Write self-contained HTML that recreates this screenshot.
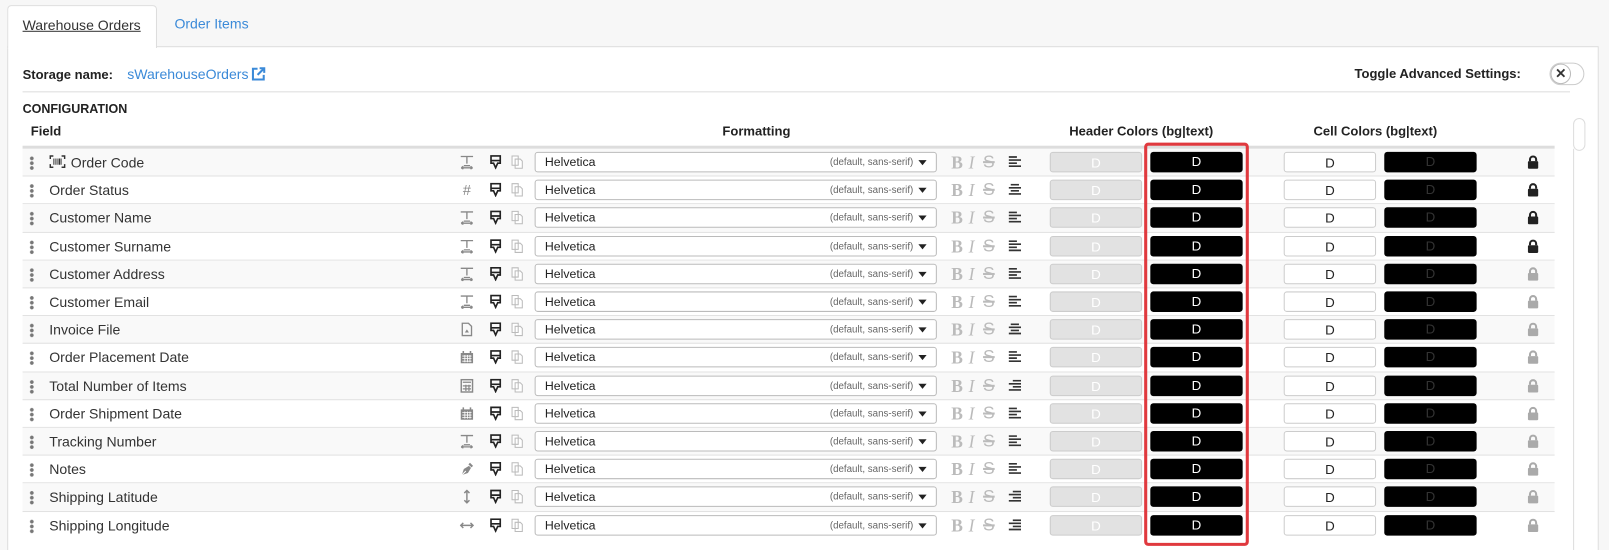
<!DOCTYPE html>
<html style="overflow:hidden;height:550px"><head><meta charset="utf-8"><style>
*{box-sizing:border-box;margin:0;padding:0}
body{width:1609px;height:550px;background:#f7f7f7;font-family:"Liberation Sans",sans-serif;position:relative;overflow:hidden;color:#333}
#w{position:absolute;left:0;top:0;width:1568px;height:536px;overflow:hidden;transform:scale(1.02615);transform-origin:0 0}
.tab{position:absolute;left:7px;top:5px;width:146px;height:42px;background:#fff;border:1px solid #ddd;border-bottom:none;border-radius:4px 4px 0 0;z-index:2}
.tab span{position:absolute;left:14px;top:11px;font-size:13.7px;color:#333;text-decoration:underline}
.tab2{position:absolute;left:170px;top:16px;font-size:13.7px;color:#3b8ad8}
.panel{position:absolute;left:7px;top:45px;width:1551px;height:500px;background:#fff;border:1px solid #ddd}
.abs{position:absolute}
.r{position:absolute;left:22px;width:1493px;height:27.2px;border-bottom:1px solid #e2e2e2}
.r.g{background:#f9f9f9}
.r>*{position:absolute}
.dots{left:7px;top:7px;width:4px;height:14px;background:radial-gradient(circle,#777 1.6px,transparent 2px) 0 0/4px 4.7px repeat-y}
.n{left:26px;top:6px;font-size:13.7px;color:#333}
.t{left:426px;top:6px;width:14px;height:14px;color:#888;font-size:14px;line-height:14px;text-align:center}
.pin{left:455px;top:6px}
.cp{left:476px;top:6px}
.sel{left:499px;top:3px;width:392px;height:20px;border:1px solid #bbb;border-radius:3px;background:#fff;font-size:12px;line-height:18px;padding-left:9px;color:#222}
.sel em{position:absolute;right:22px;top:1px;font-style:normal;font-size:9.5px;color:#666}
.sel b{position:absolute;right:9px;top:7px;border-left:4px solid transparent;border-right:4px solid transparent;border-top:5px solid #222}
.bis{left:0;top:0;width:1px;height:1px;font-family:"Liberation Serif",serif;font-size:17px;color:#bbb}
.bis>*{position:absolute;top:4px}
.bis b{left:905px}
.bis i{left:922px}
.bis s{left:936px;top:3px;font-family:"Liberation Sans",sans-serif;font-size:17px;text-decoration-thickness:1.5px}
.al{left:961px;top:7px}
.in{top:3px;width:90px;height:20px;border-radius:3px;font-size:13px;line-height:19px;text-align:center}
.hb{left:1001px;background:#e2e2e2;border:1px solid #ccc;color:#fff}
.ht{left:1099px;background:#000;color:#fff}
.cb{left:1229px;background:#fff;border:1px solid #ccc;color:#222}
.ct{left:1327px;background:#000;color:#333}
.lk{left:1466px;top:6px}
</style></head><body>
<svg width="0" height="0" style="position:absolute">
<defs>
<symbol id="pin" viewBox="0 0 12 14"><path d="M1.5 1h9v7h-2.5l-2 4.5-2-4.5h-2.5z M1.5 5.5h9" fill="none" stroke="#222" stroke-width="1.6"/></symbol>
<symbol id="cp" viewBox="0 0 12 14"><path d="M1 1h6v9H1z M4 4h5l2 2v7H4z" fill="#fff" stroke="#bbb" stroke-width="1"/></symbol>
<symbol id="aL" viewBox="0 0 12 12"><path d="M0 1h8M0 4h12M0 7h8M0 10h12" stroke="#333" stroke-width="1.6"/></symbol>
<symbol id="aC" viewBox="0 0 12 12"><path d="M2 1h8M0 4h12M2 7h8M0 10h12" stroke="#333" stroke-width="1.6"/></symbol>
<symbol id="aR" viewBox="0 0 12 12"><path d="M4 1h8M0 4h12M4 7h8M0 10h12" stroke="#333" stroke-width="1.6"/></symbol>
<symbol id="lk" viewBox="0 0 12 14"><path d="M3 6V4.5a3 3 0 0 1 6 0V6" fill="none" stroke="currentColor" stroke-width="2"/><rect x="1" y="6" width="10" height="7.5" rx="1" fill="currentColor"/></symbol>
<symbol id="tx" viewBox="0 0 14 14"><path d="M1 1.5h12M7 1.5v7M4 10.5h6 M1.5 12.5h11M1.5 12.5l2-1.5M1.5 12.5l2 1.5M12.5 12.5l-2-1.5M12.5 12.5l-2 1.5" fill="none" stroke="#888" stroke-width="1.3"/></symbol>
<symbol id="cal" viewBox="0 0 14 14"><path d="M1 3h12v10H1z" fill="#888"/><path d="M3.5 1v3M10.5 1v3" stroke="#888" stroke-width="1.5"/><path d="M2.5 6h9M2.5 8.5h9M2.5 11h9M5 5v7M7.5 5v7M10 5v7" stroke="#fff" stroke-width=".8"/></symbol>
<symbol id="calc" viewBox="0 0 14 14"><rect x="1.5" y="1" width="11" height="12" fill="none" stroke="#888" stroke-width="1.4"/><path d="M3 3.5h8M3 7h8M3 10h8M6 6v6M9 6v6" stroke="#888" stroke-width="1.2"/></symbol>
<symbol id="file" viewBox="0 0 14 14"><path d="M2.5 1h6l3 3v9h-9z" fill="none" stroke="#888" stroke-width="1.3"/><path d="M5 10l2-3 2 3z" fill="#888"/></symbol>
<symbol id="pen" viewBox="0 0 14 14"><path d="M2 13l2-6 5-3 2 2-3 5z" fill="#888"/><path d="M10 1l3 3-1.5 1.5-3-3z" fill="#888"/><path d="M2 13l4-4" stroke="#fff" stroke-width="1"/></symbol>
<symbol id="ud" viewBox="0 0 14 14"><path d="M7 1v12M4.5 3.5L7 1l2.5 2.5M4.5 10.5L7 13l2.5-2.5" fill="none" stroke="#888" stroke-width="1.4"/></symbol>
<symbol id="lr" viewBox="0 0 14 14"><path d="M1 7h12M3.5 4.5L1 7l2.5 2.5M10.5 4.5L13 7l-2.5 2.5" fill="none" stroke="#888" stroke-width="1.4"/></symbol>
</defs></svg>
<div id="w">
<div class="tab"><span>Warehouse Orders</span></div>
<div class="tab2">Order Items</div>
<div class="panel"></div>

<div class="abs" style="left:22px;top:66px;font-size:12.7px;font-weight:bold;color:#222">Storage name:</div>
<div class="abs" style="left:124px;top:65px;font-size:13.7px;color:#3b8ad8">sWarehouseOrders</div>
<svg class="abs" style="left:245px;top:65px" width="14" height="14" viewBox="0 0 14 14"><path d="M6 2H1.5v10.5H12V8" fill="none" stroke="#3b8ad8" stroke-width="2"/><path d="M6 8l6-6M8 1.5h4.5V6" fill="none" stroke="#3b8ad8" stroke-width="2"/></svg>
<div class="abs" style="left:1320px;top:65px;font-size:12.7px;font-weight:bold;color:#222">Toggle Advanced Settings:</div>
<div class="abs" style="left:1510px;top:61px;width:34px;height:22px;border:1px solid #ccc;border-radius:11px;background:#fff"><div style="position:absolute;left:0;top:0;width:20px;height:20px;border-radius:50%;border:1px solid #bbb;font-size:13px;line-height:18px;text-align:center;font-weight:bold;color:#333">✕</div></div>
<div class="abs" style="left:22px;top:89px;width:1508px;height:1px;background:#ddd"></div>
<div class="abs" style="left:22px;top:99px;font-size:12.2px;font-weight:bold;color:#222">CONFIGURATION</div>
<div class="abs" style="left:30px;top:121px;font-size:12.7px;font-weight:bold;color:#222">Field</div>
<div class="abs" style="left:704px;top:121px;font-size:12.7px;font-weight:bold;color:#222">Formatting</div>
<div class="abs" style="left:1042px;top:121px;font-size:12.7px;font-weight:bold;color:#222">Header Colors (bg|text)</div>
<div class="abs" style="left:1280px;top:121px;font-size:12.7px;font-weight:bold;color:#222">Cell Colors (bg|text)</div>
<div class="abs" style="left:22px;top:142px;width:1493px;height:3px;background:#ddd"></div>
<div class="abs" style="left:1533px;top:115px;width:12px;height:32px;border:1px solid #ddd;border-radius:6px;background:#fff"></div>
<div class="abs" style="left:1533px;top:145px;width:12px;height:400px;border-left:1px solid #ddd"></div>

<div class="r g" style="top:145px"><i class="dots"></i><svg style="position:absolute;left:26px;top:6px" width="16" height="13" viewBox="0 0 16 13"><path d="M1 4V1h3M12 1h3v3M15 9v3h-3M4 12H1V9" fill="none" stroke="#333" stroke-width="1.4"/><path d="M4.5 3.5v6M6.5 3.5v6M8.5 3.5v6M10 3.5v6M11.5 3.5v6" stroke="#333" stroke-width="1"/></svg><span class="n" style="left:47px">Order Code</span><svg class="t"><use href="#tx"/></svg><svg class="pin" width="12" height="14"><use href="#pin"/></svg><svg class="cp" width="12" height="14"><use href="#cp"/></svg><div class="sel">Helvetica<em>(default, sans-serif)</em><b></b></div><span class="bis"><b>B</b><i>I</i><s>S</s></span><svg class="al" width="12" height="12"><use href="#aL"/></svg><div class="in hb">D</div><div class="in ht">D</div><div class="in cb">D</div><div class="in ct">D</div><svg class="lk" width="12" height="14" style="color:#222"><use href="#lk"/></svg></div>

<div class="r" style="top:172.2px"><i class="dots"></i><span class="n">Order Status</span><span class="t">#</span><svg class="pin" width="12" height="14"><use href="#pin"/></svg><svg class="cp" width="12" height="14"><use href="#cp"/></svg><div class="sel">Helvetica<em>(default, sans-serif)</em><b></b></div><span class="bis"><b>B</b><i>I</i><s>S</s></span><svg class="al" width="12" height="12"><use href="#aC"/></svg><div class="in hb">D</div><div class="in ht">D</div><div class="in cb">D</div><div class="in ct">D</div><svg class="lk" width="12" height="14" style="color:#222"><use href="#lk"/></svg></div>

<div class="r g" style="top:199.4px"><i class="dots"></i><span class="n">Customer Name</span><svg class="t"><use href="#tx"/></svg><svg class="pin" width="12" height="14"><use href="#pin"/></svg><svg class="cp" width="12" height="14"><use href="#cp"/></svg><div class="sel">Helvetica<em>(default, sans-serif)</em><b></b></div><span class="bis"><b>B</b><i>I</i><s>S</s></span><svg class="al" width="12" height="12"><use href="#aL"/></svg><div class="in hb">D</div><div class="in ht">D</div><div class="in cb">D</div><div class="in ct">D</div><svg class="lk" width="12" height="14" style="color:#222"><use href="#lk"/></svg></div>

<div class="r" style="top:226.6px"><i class="dots"></i><span class="n">Customer Surname</span><svg class="t"><use href="#tx"/></svg><svg class="pin" width="12" height="14"><use href="#pin"/></svg><svg class="cp" width="12" height="14"><use href="#cp"/></svg><div class="sel">Helvetica<em>(default, sans-serif)</em><b></b></div><span class="bis"><b>B</b><i>I</i><s>S</s></span><svg class="al" width="12" height="12"><use href="#aL"/></svg><div class="in hb">D</div><div class="in ht">D</div><div class="in cb">D</div><div class="in ct">D</div><svg class="lk" width="12" height="14" style="color:#222"><use href="#lk"/></svg></div>

<div class="r g" style="top:253.8px"><i class="dots"></i><span class="n">Customer Address</span><svg class="t"><use href="#tx"/></svg><svg class="pin" width="12" height="14"><use href="#pin"/></svg><svg class="cp" width="12" height="14"><use href="#cp"/></svg><div class="sel">Helvetica<em>(default, sans-serif)</em><b></b></div><span class="bis"><b>B</b><i>I</i><s>S</s></span><svg class="al" width="12" height="12"><use href="#aL"/></svg><div class="in hb">D</div><div class="in ht">D</div><div class="in cb">D</div><div class="in ct">D</div><svg class="lk" width="12" height="14" style="color:#aaa"><use href="#lk"/></svg></div>

<div class="r" style="top:281px"><i class="dots"></i><span class="n">Customer Email</span><svg class="t"><use href="#tx"/></svg><svg class="pin" width="12" height="14"><use href="#pin"/></svg><svg class="cp" width="12" height="14"><use href="#cp"/></svg><div class="sel">Helvetica<em>(default, sans-serif)</em><b></b></div><span class="bis"><b>B</b><i>I</i><s>S</s></span><svg class="al" width="12" height="12"><use href="#aL"/></svg><div class="in hb">D</div><div class="in ht">D</div><div class="in cb">D</div><div class="in ct">D</div><svg class="lk" width="12" height="14" style="color:#aaa"><use href="#lk"/></svg></div>

<div class="r g" style="top:308.2px"><i class="dots"></i><span class="n">Invoice File</span><svg class="t"><use href="#file"/></svg><svg class="pin" width="12" height="14"><use href="#pin"/></svg><svg class="cp" width="12" height="14"><use href="#cp"/></svg><div class="sel">Helvetica<em>(default, sans-serif)</em><b></b></div><span class="bis"><b>B</b><i>I</i><s>S</s></span><svg class="al" width="12" height="12"><use href="#aC"/></svg><div class="in hb">D</div><div class="in ht">D</div><div class="in cb">D</div><div class="in ct">D</div><svg class="lk" width="12" height="14" style="color:#aaa"><use href="#lk"/></svg></div>

<div class="r" style="top:335.4px"><i class="dots"></i><span class="n">Order Placement Date</span><svg class="t"><use href="#cal"/></svg><svg class="pin" width="12" height="14"><use href="#pin"/></svg><svg class="cp" width="12" height="14"><use href="#cp"/></svg><div class="sel">Helvetica<em>(default, sans-serif)</em><b></b></div><span class="bis"><b>B</b><i>I</i><s>S</s></span><svg class="al" width="12" height="12"><use href="#aL"/></svg><div class="in hb">D</div><div class="in ht">D</div><div class="in cb">D</div><div class="in ct">D</div><svg class="lk" width="12" height="14" style="color:#aaa"><use href="#lk"/></svg></div>

<div class="r g" style="top:362.6px"><i class="dots"></i><span class="n">Total Number of Items</span><svg class="t"><use href="#calc"/></svg><svg class="pin" width="12" height="14"><use href="#pin"/></svg><svg class="cp" width="12" height="14"><use href="#cp"/></svg><div class="sel">Helvetica<em>(default, sans-serif)</em><b></b></div><span class="bis"><b>B</b><i>I</i><s>S</s></span><svg class="al" width="12" height="12"><use href="#aR"/></svg><div class="in hb">D</div><div class="in ht">D</div><div class="in cb">D</div><div class="in ct">D</div><svg class="lk" width="12" height="14" style="color:#aaa"><use href="#lk"/></svg></div>

<div class="r" style="top:389.8px"><i class="dots"></i><span class="n">Order Shipment Date</span><svg class="t"><use href="#cal"/></svg><svg class="pin" width="12" height="14"><use href="#pin"/></svg><svg class="cp" width="12" height="14"><use href="#cp"/></svg><div class="sel">Helvetica<em>(default, sans-serif)</em><b></b></div><span class="bis"><b>B</b><i>I</i><s>S</s></span><svg class="al" width="12" height="12"><use href="#aL"/></svg><div class="in hb">D</div><div class="in ht">D</div><div class="in cb">D</div><div class="in ct">D</div><svg class="lk" width="12" height="14" style="color:#aaa"><use href="#lk"/></svg></div>

<div class="r g" style="top:417px"><i class="dots"></i><span class="n">Tracking Number</span><svg class="t"><use href="#tx"/></svg><svg class="pin" width="12" height="14"><use href="#pin"/></svg><svg class="cp" width="12" height="14"><use href="#cp"/></svg><div class="sel">Helvetica<em>(default, sans-serif)</em><b></b></div><span class="bis"><b>B</b><i>I</i><s>S</s></span><svg class="al" width="12" height="12"><use href="#aL"/></svg><div class="in hb">D</div><div class="in ht">D</div><div class="in cb">D</div><div class="in ct">D</div><svg class="lk" width="12" height="14" style="color:#aaa"><use href="#lk"/></svg></div>

<div class="r" style="top:444.2px"><i class="dots"></i><span class="n">Notes</span><svg class="t"><use href="#pen"/></svg><svg class="pin" width="12" height="14"><use href="#pin"/></svg><svg class="cp" width="12" height="14"><use href="#cp"/></svg><div class="sel">Helvetica<em>(default, sans-serif)</em><b></b></div><span class="bis"><b>B</b><i>I</i><s>S</s></span><svg class="al" width="12" height="12"><use href="#aL"/></svg><div class="in hb">D</div><div class="in ht">D</div><div class="in cb">D</div><div class="in ct">D</div><svg class="lk" width="12" height="14" style="color:#aaa"><use href="#lk"/></svg></div>

<div class="r g" style="top:471.4px"><i class="dots"></i><span class="n">Shipping Latitude</span><svg class="t"><use href="#ud"/></svg><svg class="pin" width="12" height="14"><use href="#pin"/></svg><svg class="cp" width="12" height="14"><use href="#cp"/></svg><div class="sel">Helvetica<em>(default, sans-serif)</em><b></b></div><span class="bis"><b>B</b><i>I</i><s>S</s></span><svg class="al" width="12" height="12"><use href="#aR"/></svg><div class="in hb">D</div><div class="in ht">D</div><div class="in cb">D</div><div class="in ct">D</div><svg class="lk" width="12" height="14" style="color:#aaa"><use href="#lk"/></svg></div>

<div class="r" style="top:498.6px;border-bottom:none"><i class="dots"></i><span class="n">Shipping Longitude</span><svg class="t"><use href="#lr"/></svg><svg class="pin" width="12" height="14"><use href="#pin"/></svg><svg class="cp" width="12" height="14"><use href="#cp"/></svg><div class="sel">Helvetica<em>(default, sans-serif)</em><b></b></div><span class="bis"><b>B</b><i>I</i><s>S</s></span><svg class="al" width="12" height="12"><use href="#aR"/></svg><div class="in hb">D</div><div class="in ht">D</div><div class="in cb">D</div><div class="in ct">D</div><svg class="lk" width="12" height="14" style="color:#aaa"><use href="#lk"/></svg></div>

<div class="abs" style="left:1115px;top:139px;width:102px;height:393px;border:3px solid #e0393e;border-radius:4px"></div>
</div>
</body></html>
